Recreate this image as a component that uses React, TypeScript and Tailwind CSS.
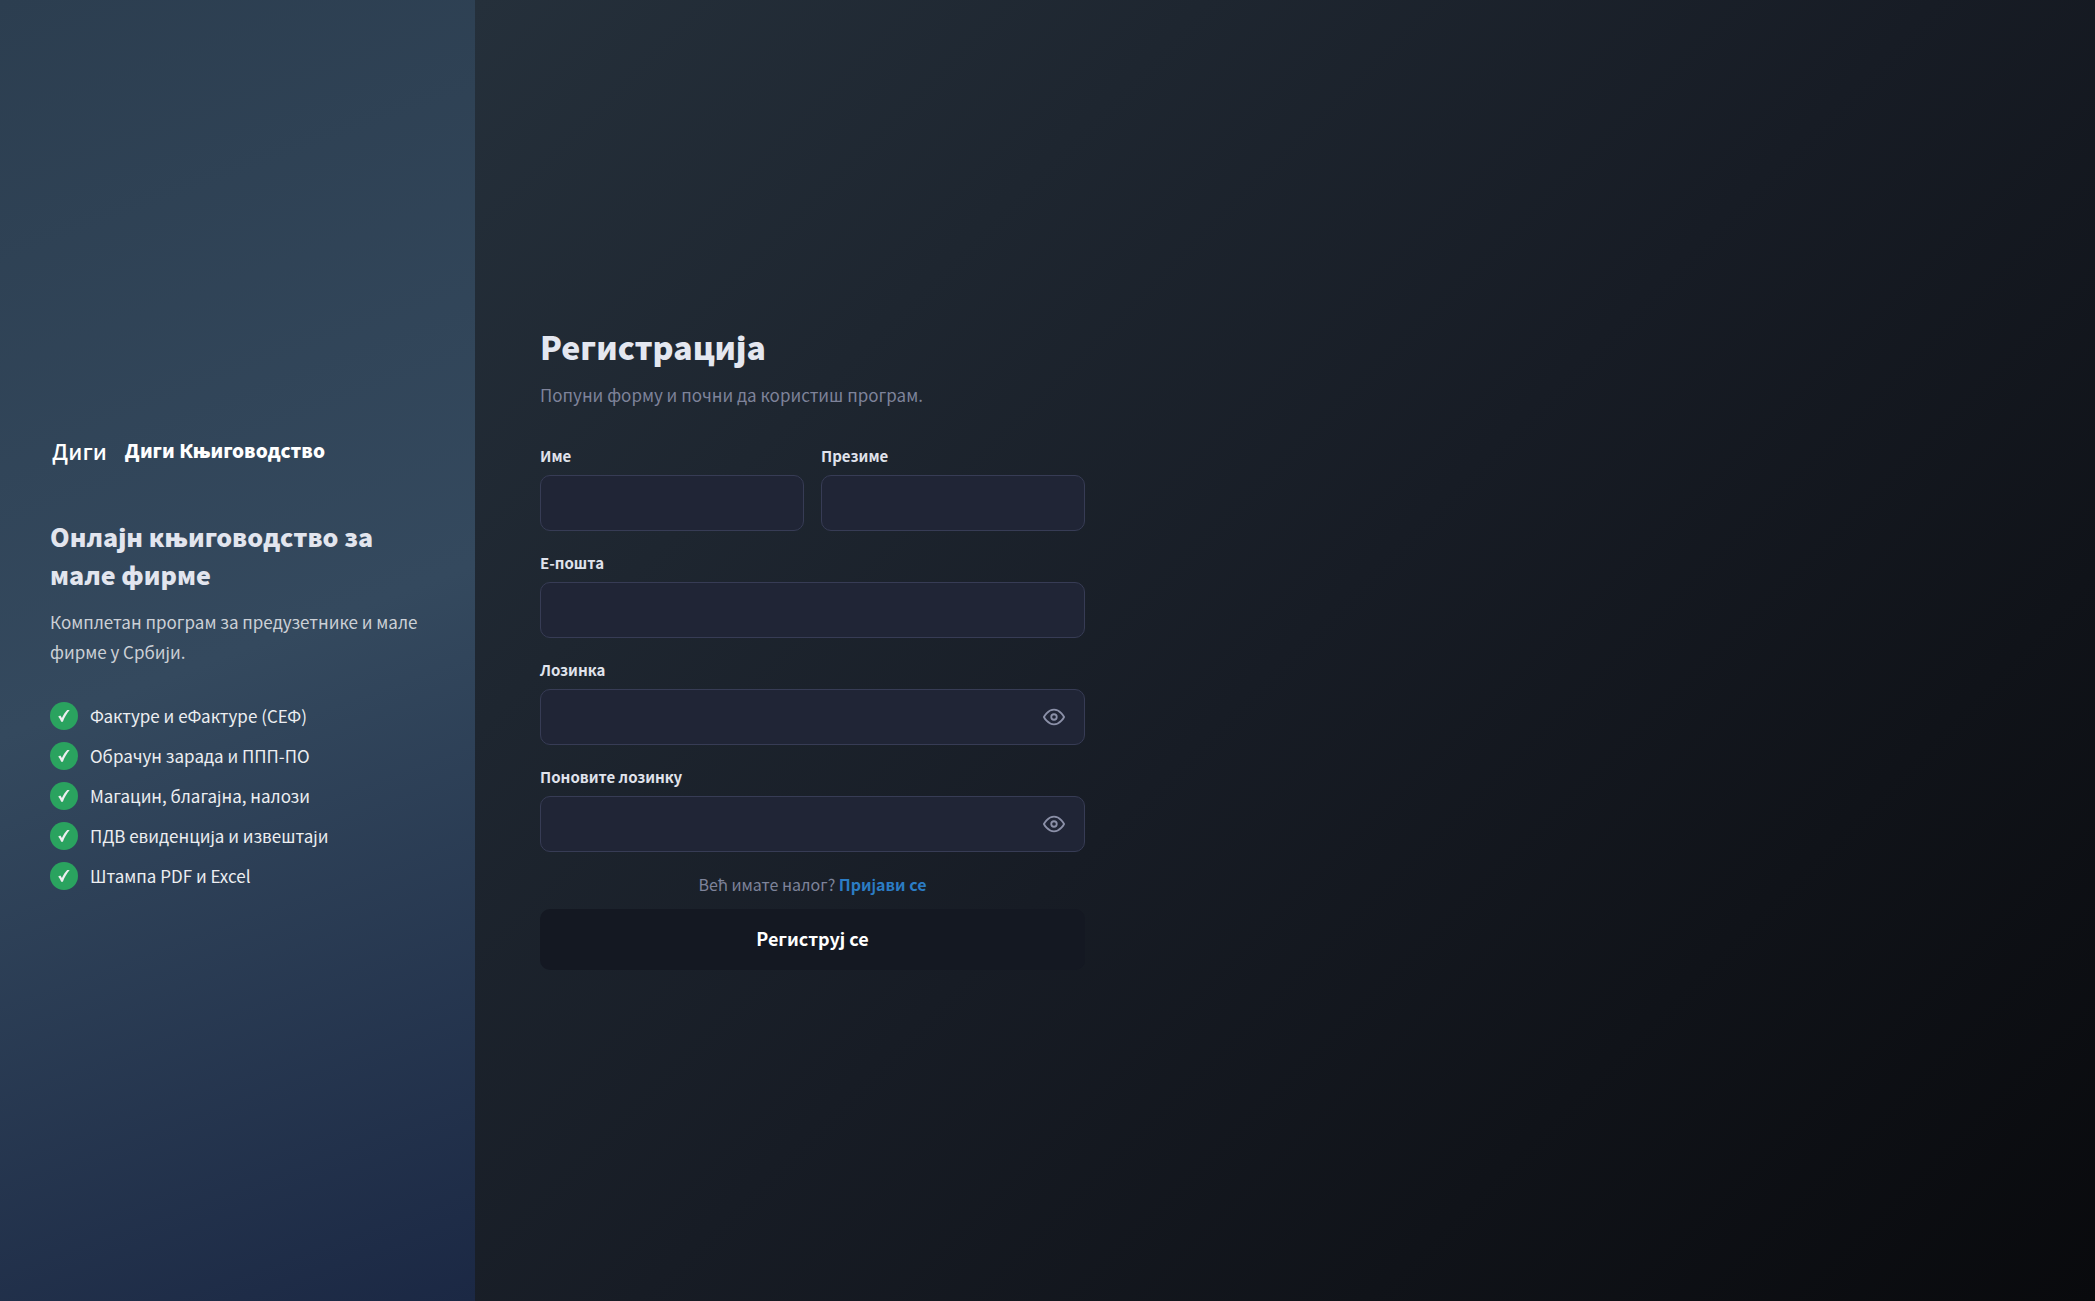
import { useState } from 'react';

const features = [
  'Фактуре и еФактуре (СЕФ)',
  'Обрачун зарада и ППП-ПО',
  'Магацин, благајна, налози',
  'ПДВ евиденција и извештаји',
  'Штампа PDF и Excel',
];

const inputClass =
  'block h-14 w-full rounded-[10px] border border-[#373c55] bg-[#202536] px-4 text-[17px] text-[#e4e7f0] outline-none focus:border-[#2980d9]';

const labelClass = 'mb-2.5 block text-[15px] leading-[19px] font-bold text-[#e0e3ec]';

function CheckIcon() {
  return (
    <svg width="14" height="14" viewBox="0 0 14 14" fill="currentColor" aria-hidden="true">
      <path d="M1.2 7.4 3.3 6.4c.7.7 1.2 1.6 1.6 2.6C6.400 5.800 8.200 3.200 10.200 1h2.500C9.600 4.700 7.400 8.500 5.900 12.700H4.200C3.500 10.600 2.500 8.800 1.200 7.400z" />
    </svg>
  );
}

function EyeIcon() {
  return (
    <svg
      width="22"
      height="22"
      viewBox="0 0 24 24"
      fill="none"
      stroke="currentColor"
      strokeWidth="2"
      strokeLinecap="round"
      strokeLinejoin="round"
      aria-hidden="true"
    >
      <path d="M1 12s4-8 11-8 11 8 11 8-4 8-11 8-11-8-11-8z" />
      <circle cx="12" cy="12" r="3" />
    </svg>
  );
}

function Field({ id, label, type = 'text' }: { id: string; label: string; type?: string }) {
  return (
    <div>
      <label htmlFor={id} className={labelClass}>
        {label}
      </label>
      <input id={id} name={id} type={type} className={inputClass} />
    </div>
  );
}

function PasswordField({ id, label }: { id: string; label: string }) {
  const [visible, setVisible] = useState(false);
  return (
    <div>
      <label htmlFor={id} className={labelClass}>
        {label}
      </label>
      <div className="relative">
        <input id={id} name={id} type={visible ? 'text' : 'password'} className={inputClass} />
        <button
          type="button"
          aria-label="Прикажи лозинку"
          onClick={() => setVisible(!visible)}
          className="absolute inset-y-0 right-5 flex items-center text-[#8b90a8]"
        >
          <EyeIcon />
        </button>
      </div>
    </div>
  );
}

export default function App() {
  return (
    <div className="flex min-h-screen font-['Noto_Sans_CJK_SC','Noto_Sans',sans-serif]">
      <aside className="flex w-[475px] shrink-0 flex-col justify-center bg-[linear-gradient(160deg,#2c3e50_0%,#34495e_50%,#1b2844_100%)] px-[50px]">
        <div className="flex h-[76px] items-center gap-[18px]">
          <span className="pl-0.5 text-[22px] leading-8 font-medium text-white">Диги</span>
          <span className="text-[19px] leading-8 font-black text-white">Диги Књиговодство</span>
        </div>
        <h2 className="mt-[29px] text-[25px] leading-[38px] font-black text-[#e2e5ee]">
          Онлајн књиговодство за мале фирме
        </h2>
        <p className="mt-3.5 text-[17px] leading-[30px] text-[#ccd0d6]">
          Комплетан програм за предузетнике и мале фирме у Србији.
        </p>
        <ul className="mt-[35px] flex flex-col gap-3">
          {features.map((feature) => (
            <li key={feature} className="flex h-7 items-center gap-3 text-[17px] text-[#eceef1]">
              <span className="flex size-7 items-center justify-center rounded-full bg-[#2aa35f]">
                <CheckIcon />
              </span>
              {feature}
            </li>
          ))}
        </ul>
      </aside>

      <main className="flex flex-1 flex-col justify-center bg-[linear-gradient(135deg,#25303b_0%,#171c25_50%,#090a0d_100%)] px-[65px]">
        <form className="w-full max-w-[545px]" onSubmit={(e) => e.preventDefault()}>
          <h1 className="text-[32px] leading-[30px] font-black text-[#e4e7f0]">Регистрација</h1>
          <p className="mt-5 text-[17px] leading-7 text-[#7e839a]">
            Попуни форму и почни да користиш програм.
          </p>
          <div className="mt-[37px] flex flex-col gap-[22px]">
            <div className="grid grid-cols-2 gap-[17px]">
              <Field id="first-name" label="Име" />
              <Field id="last-name" label="Презиме" />
            </div>
            <Field id="email" label="Е-пошта" type="email" />
            <PasswordField id="password" label="Лозинка" />
            <PasswordField id="password-repeat" label="Поновите лозинку" />
            <p className="text-center text-[16px] leading-5 text-[#7e839a]">
              Већ имате налог?{' '}
              <a href="#login" className="font-semibold text-[#2b7cc4]">
                Пријави се
              </a>
            </p>
          </div>
          <button
            type="submit"
            className="mt-[15px] h-[61px] w-full rounded-[10px] bg-[#141822] pb-0.5 text-[18px] font-bold text-white"
          >
            Региструј се
          </button>
        </form>
      </main>
    </div>
  );
}
